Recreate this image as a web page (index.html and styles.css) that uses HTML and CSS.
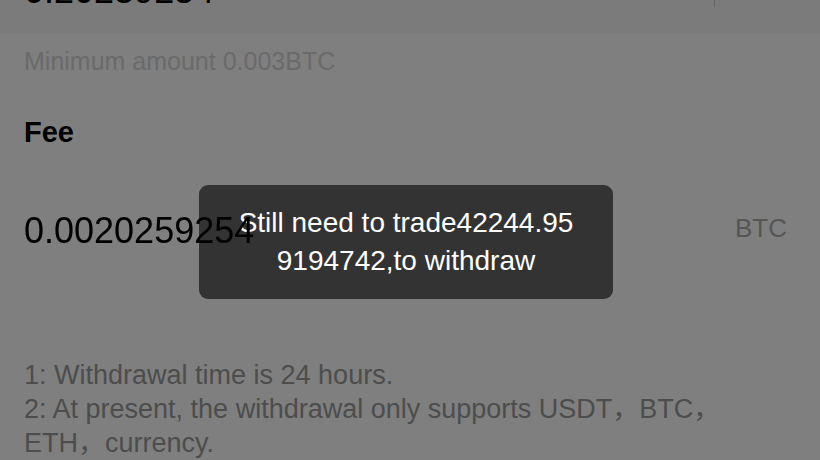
FILE: index.html
```html
<!DOCTYPE html>
<html lang="en">
<head>
  <meta charset="UTF-8" />
  <title>Withdraw</title>
  <link rel="stylesheet" href="styles.css">
</head>
<body>
  <div class="page">
    <div class="amount-row">
      <div class="amount-value">0.20239254</div>
      <div class="divider"></div>
      <div class="amount-side"></div>
    </div>
    <p class="hint">Minimum amount 0.003BTC</p>

    <h3 class="label">Fee</h3>
    <div class="fee-row">
      <span class="fee-value">0.0020259254</span>
      <span class="fee-unit">BTC</span>
    </div>

    <div class="notes">
      <p>1: Withdrawal time is 24 hours.</p>
      <p>2: At present, the withdrawal only supports USDT，BTC，ETH，currency.</p>
    </div>
  </div>

  <div class="mask">
    <div class="toast">Still need to trade42244.959194742,to withdraw</div>
  </div>
</body>
</html>
```

FILE: styles.css
```css
* { box-sizing: border-box; }
html, body { margin: 0; padding: 0; height: 100%; overflow: hidden; }
body { font-family: "Liberation Sans", "Noto Sans CJK SC", sans-serif; background: #fff; color: #000; }
p, h3 { margin: 0; }

.amount-row { display: flex; align-items: flex-end; height: 34px; padding-left: 24px; background: #f6f6f9; overflow: hidden; }
.amount-value { flex: 1; font-size: 36px; line-height: 40px; margin-bottom: 23px; }
.divider { width: 1px; height: 40px; margin-bottom: 27px; background: #c8c8c8; }
.amount-side { width: 105px; }

.hint { padding: 10px 24px 0; font-size: 25px; line-height: 34px; color: #d5d5d5; }
.label { margin-top: 34px; padding: 0 24px; font-size: 29px; line-height: 41px; font-weight: 600; }

.fee-row { display: flex; align-items: center; justify-content: space-between; margin-top: 53px; padding: 0 33px 0 24px; height: 50px; }
/* the value field sits above the toast layer in the app */
.fee-value { position: relative; z-index: 2; font-size: 36px; }
.fee-unit { font-size: 26px; color: #acacac; margin-bottom: 6px; }

.notes { margin-top: 102px; padding: 0 24px; font-size: 27px; line-height: 34px; color: #9a9a9a; }

.mask { position: fixed; inset: 0; z-index: 1; background: rgba(0,0,0,0.5); display: flex; align-items: center; justify-content: center; padding: 23px 8px 0 0; }
.toast { width: 414px; padding: 19px 36px; background: #333; border-radius: 9px; color: #fff; font-size: 28px; line-height: 38px; text-align: center; word-break: break-all; }
```
